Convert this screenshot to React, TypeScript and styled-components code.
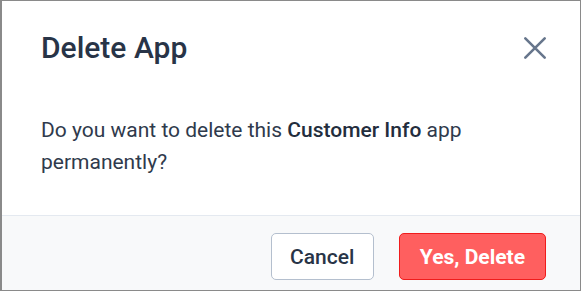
import React from 'react';
import styled, { createGlobalStyle } from 'styled-components';

const GlobalStyle = createGlobalStyle`
  html, body {
    margin: 0;
    padding: 0;
    background: #ffffff;
  }
  * {
    box-sizing: border-box;
  }
`;

const Modal = styled.div`
  width: 581px;
  height: 291px;
  display: flex;
  flex-direction: column;
  background: #ffffff;
  border: 1px solid #8a8a8a;
  border-left-width: 2px;
  font-family: Roboto, 'Noto Sans', sans-serif;
`;

const Header = styled.div`
  display: flex;
  align-items: center;
  justify-content: space-between;
  padding: 31px 33px 0 39px;
`;

const Title = styled.h2`
  margin: 0;
  font-size: 30px;
  line-height: 32px;
  font-weight: 500;
  color: #283447;
`;

const CloseButton = styled.button`
  display: flex;
  padding: 0;
  border: 0;
  background: none;
  color: #67768c;
  cursor: pointer;
`;

const Body = styled.p`
  margin: 50px 40px 0 39px;
  font-size: 21px;
  line-height: 32px;
  color: #2f3a4c;
`;

const Strong = styled.strong`
  font-weight: 500;
  color: #232d3d;
`;

const Footer = styled.div`
  margin-top: auto;
  display: flex;
  justify-content: flex-end;
  gap: 25px;
  padding: 17px 34px 10px;
  background: #f8f9fa;
  border-top: 1px solid #e4e9f0;
`;

const Button = styled.button<{ $danger?: boolean }>`
  height: 47px;
  padding: 0 ${(p) => (p.$danger ? '20px' : '18.5px')};
  border-radius: 5px;
  border: 1px solid ${(p) => (p.$danger ? '#f01c1c' : '#b4bfce')};
  background: ${(p) => (p.$danger ? '#ff5f5f' : '#ffffff')};
  color: ${(p) => (p.$danger ? '#ffffff' : '#283447')};
  font-family: Roboto, 'Noto Sans', sans-serif;
  font-size: 21px;
  font-weight: ${(p) => (p.$danger ? 700 : 500)};
  cursor: pointer;
`;

const CloseIcon = () => (
  <svg width="24" height="24" viewBox="0 0 24 24" fill="none" stroke="currentColor" strokeWidth="2.6" strokeLinecap="round">
    <path d="M2.3 2.3L21.7 21.7M21.7 2.3L2.3 21.7" />
  </svg>
);

const App = () => {
  return (
    <>
      <GlobalStyle />
      <Modal>
        <Header>
          <Title>Delete App</Title>
          <CloseButton aria-label="Close">
            <CloseIcon />
          </CloseButton>
        </Header>
        <Body>
          Do you want to delete this <Strong>Customer Info</Strong> app permanently?
        </Body>
        <Footer>
          <Button>Cancel</Button>
          <Button $danger>Yes, Delete</Button>
        </Footer>
      </Modal>
    </>
  );
};

export default App;
